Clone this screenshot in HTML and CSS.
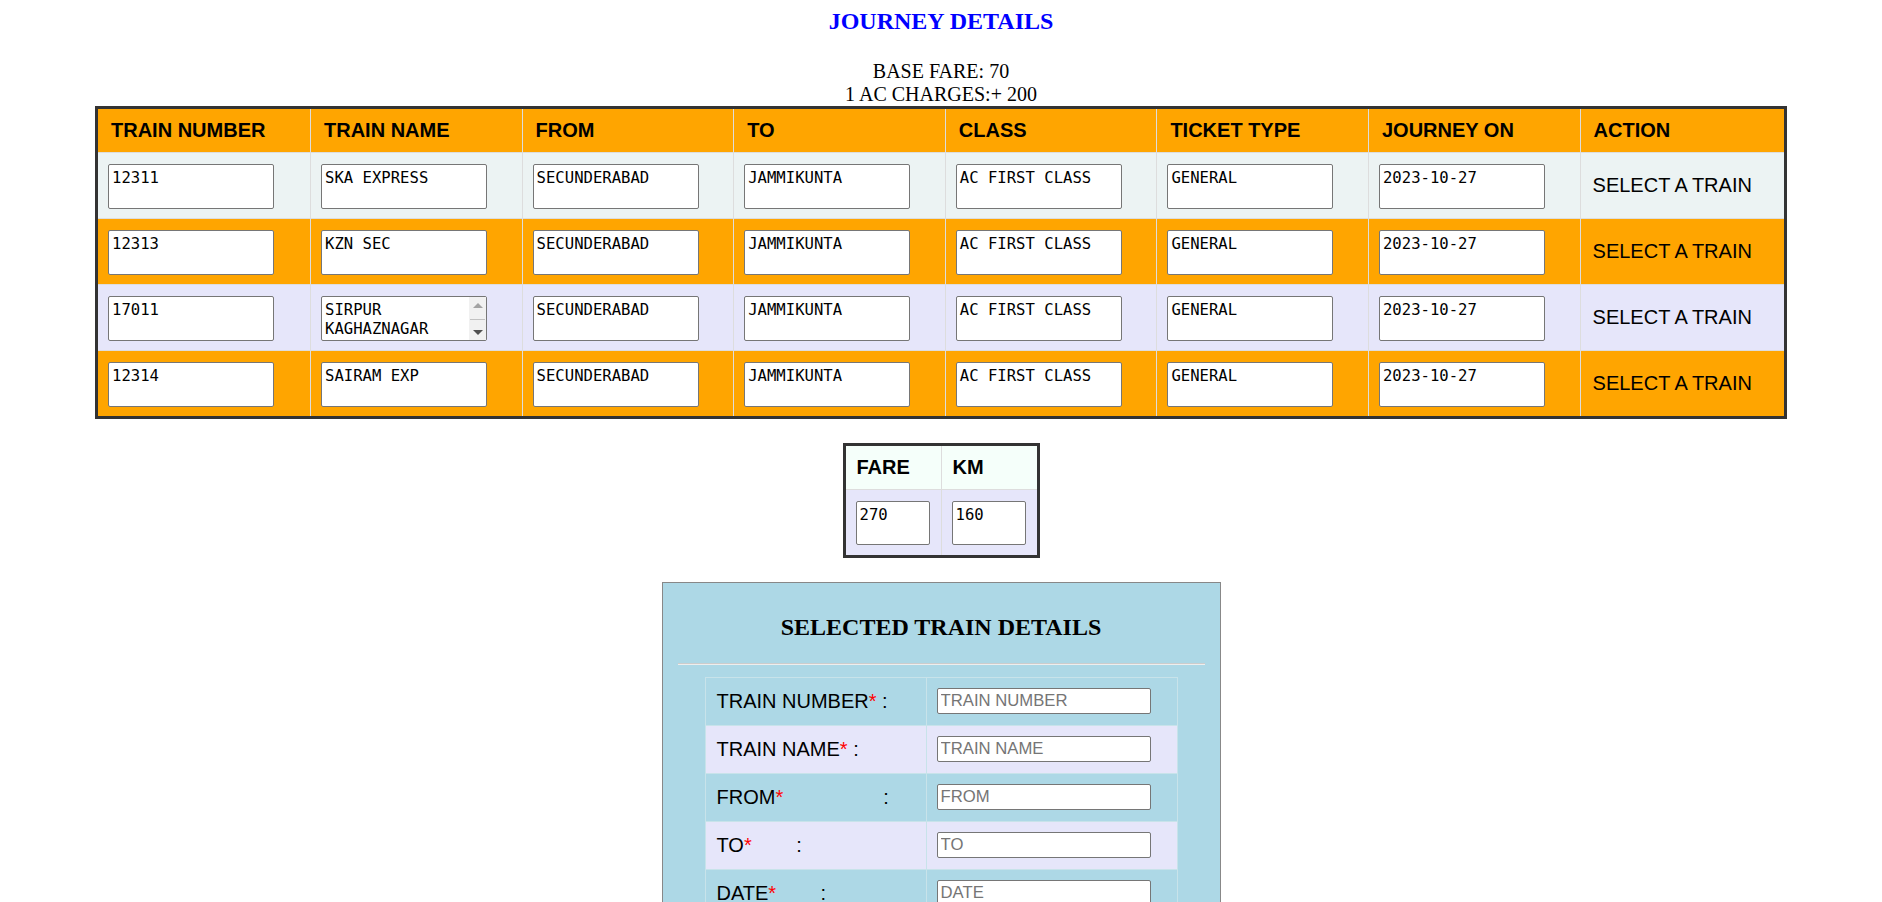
FILE: index.html
```html
<!DOCTYPE html>
<html lang="en">
<head>
<meta charset="UTF-8">
<title>Journey Details</title>
<link rel="stylesheet" href="styles.css">
</head>
<body>

<h2 class="page-title">JOURNEY DETAILS</h2>
<div class="fare-info">BASE FARE: 70<br>1 AC CHARGES:+ 200</div>

<table class="train-table">
    <colgroup>
        <col class="col-first">
        <col class="col-mid">
        <col class="col-mid">
        <col class="col-mid">
        <col class="col-mid">
        <col class="col-mid">
        <col class="col-mid">
        <col>
    </colgroup>
    <tr>
        <th>TRAIN NUMBER</th>
        <th>TRAIN NAME</th>
        <th>FROM</th>
        <th>TO</th>
        <th>CLASS</th>
        <th>TICKET TYPE</th>
        <th>JOURNEY ON</th>
        <th>ACTION</th>
    </tr>
    <tr class="row-grey">
        <td><textarea>12311</textarea></td>
        <td><textarea>SKA EXPRESS</textarea></td>
        <td><textarea>SECUNDERABAD</textarea></td>
        <td><textarea>JAMMIKUNTA</textarea></td>
        <td><textarea>AC FIRST CLASS</textarea></td>
        <td><textarea>GENERAL</textarea></td>
        <td><textarea>2023-10-27</textarea></td>
        <td class="action">SELECT A TRAIN</td>
    </tr>
    <tr class="row-orange">
        <td><textarea>12313</textarea></td>
        <td><textarea>KZN SEC</textarea></td>
        <td><textarea>SECUNDERABAD</textarea></td>
        <td><textarea>JAMMIKUNTA</textarea></td>
        <td><textarea>AC FIRST CLASS</textarea></td>
        <td><textarea>GENERAL</textarea></td>
        <td><textarea>2023-10-27</textarea></td>
        <td class="action">SELECT A TRAIN</td>
    </tr>
    <tr class="row-lavender">
        <td><textarea>17011</textarea></td>
        <td>
            <div class="scroll-wrap">
                <textarea class="scroll">SIRPUR KAGHAZNAGAR</textarea>
                <span class="fake-scroll"><i class="arr-up"></i><i class="thumb"></i><i class="arr-down"></i></span>
            </div>
        </td>
        <td><textarea>SECUNDERABAD</textarea></td>
        <td><textarea>JAMMIKUNTA</textarea></td>
        <td><textarea>AC FIRST CLASS</textarea></td>
        <td><textarea>GENERAL</textarea></td>
        <td><textarea>2023-10-27</textarea></td>
        <td class="action">SELECT A TRAIN</td>
    </tr>
    <tr class="row-orange">
        <td><textarea>12314</textarea></td>
        <td><textarea>SAIRAM EXP</textarea></td>
        <td><textarea>SECUNDERABAD</textarea></td>
        <td><textarea>JAMMIKUNTA</textarea></td>
        <td><textarea>AC FIRST CLASS</textarea></td>
        <td><textarea>GENERAL</textarea></td>
        <td><textarea>2023-10-27</textarea></td>
        <td class="action">SELECT A TRAIN</td>
    </tr>
</table>

<table class="fare-table">
    <tr>
        <th>FARE</th>
        <th>KM</th>
    </tr>
    <tr>
        <td><textarea>270</textarea></td>
        <td><textarea>160</textarea></td>
    </tr>
</table>

<div class="selected-box">
    <h2>SELECTED TRAIN DETAILS</h2>
    <hr>
    <table class="form-table">
        <tr>
            <td class="label">TRAIN NUMBER<span class="req">*</span> :</td>
            <td><input type="text" placeholder="TRAIN NUMBER"></td>
        </tr>
        <tr>
            <td class="label">TRAIN NAME<span class="req">*</span> :</td>
            <td><input type="text" placeholder="TRAIN NAME"></td>
        </tr>
        <tr>
            <td class="label">FROM<span class="req">*</span>&nbsp;&nbsp;&nbsp;&nbsp;&nbsp;&nbsp;&nbsp;&nbsp;&nbsp;&nbsp;&nbsp;&nbsp;&nbsp;&nbsp;&nbsp;&nbsp;&nbsp;&nbsp;:</td>
            <td><input type="text" placeholder="FROM"></td>
        </tr>
        <tr>
            <td class="label">TO<span class="req">*</span>&nbsp;&nbsp;&nbsp;&nbsp;&nbsp;&nbsp;&nbsp;&nbsp;:</td>
            <td><input type="text" placeholder="TO"></td>
        </tr>
        <tr>
            <td class="label">DATE<span class="req">*</span>&nbsp;&nbsp;&nbsp;&nbsp;&nbsp;&nbsp;&nbsp;&nbsp;:</td>
            <td><input type="text" placeholder="DATE"></td>
        </tr>
    </table>
</div>

</body>
</html>
```
FILE: styles.css
```css
body{
    margin: 8px;
    font-family: "Liberation Serif", "Times New Roman", serif;
    color: #000;
    background: #fff;
}
.page-title{
    margin: 0 0 25px;
    font-size: 24px;
    text-align: center;
    color: #0000ff;
}
.fare-info{
    font-size: 20px;
    text-align: center;
}

/* main list of trains */
.train-table{
    width: 1692px;
    margin: 0 auto;
    border-collapse: collapse;
    table-layout: fixed;
    border: 3px solid #333;
    font-family: "Liberation Sans", Arial, sans-serif;
}
.col-first{ width: 214px; }
.col-mid{ width: 211.6px; }
.train-table th,
.fare-table th{
    background: #ffa500;
    font-size: 20px;
    line-height: 23px;
    font-weight: bold;
    text-align: left;
    padding: 10px 12px 10px 13px;
    border: 1px solid #ddd;
}
.train-table td,
.fare-table td{
    padding: 11px 10px 9px;
    border: 1px solid #ddd;
    vertical-align: middle;
}
.row-grey td{ background: #ecf3f3; }
.row-orange td{ background: #ffa500; }
.row-lavender td{ background: #e6e6fa; }
.train-table td.action{
    font-size: 20px;
    padding: 0 10px 0 12px;
}

textarea{
    display: block;
    box-sizing: border-box;
    width: 166px;
    height: 45px;
    margin: 0;
    padding: 4px 3px 2px;
    border: 1px solid #767676;
    border-radius: 2px;
    background: #fff;
    font-family: "DejaVu Sans Mono", monospace;
    font-size: 15.6px;
    line-height: 19px;
    color: #000;
    resize: none;
    overflow: hidden;
}
textarea.scroll{
    padding-right: 20px;
}

/* scrollbar drawn over the long name box */
.scroll-wrap{
    position: relative;
    width: 166px;
}
.fake-scroll{
    position: absolute;
    top: 1px;
    right: 1px;
    bottom: 1px;
    width: 17px;
    background: #f1f1f1;
    display: flex;
    flex-direction: column;
    align-items: center;
    justify-content: space-between;
    padding: 6px 0 5px;
    box-sizing: border-box;
}
.fake-scroll i{
    display: block;
}
.arr-up{
    width: 0;
    height: 0;
    border-left: 5px solid transparent;
    border-right: 5px solid transparent;
    border-bottom: 5px solid #a3a3a3;
}
.thumb{
    width: 15px;
    height: 1px;
    background: #c1c1c1;
}
.arr-down{
    width: 0;
    height: 0;
    border-left: 5px solid transparent;
    border-right: 5px solid transparent;
    border-top: 5px solid #505050;
}

/* fare and distance */
.fare-table{
    width: 197px;
    margin: 24px auto 0;
    border-collapse: collapse;
    table-layout: fixed;
    border: 3px solid #333;
    font-family: "Liberation Sans", Arial, sans-serif;
}
.fare-table th{
    background: #f5fffa;
    padding: 10px 10px 10px 11px;
}
.fare-table td{
    background: #e6e6fa;
    padding: 11px 10px 10px;
}
.fare-table textarea{
    width: 74px;
    height: 44px;
}

/* selected train form */
.selected-box{
    width: 527px;
    margin: 24px auto 0;
    padding: 0 15px 20px;
    border: 1px solid #888;
    background: #add8e6;
}
.selected-box h2{
    margin: 0;
    padding: 31px 0 22px;
    font-size: 24px;
    text-align: center;
}
.selected-box hr{
    margin: 0;
    border: none;
    border-top: 1px solid #ccc;
    border-bottom: 1px solid #eee;
}
.form-table{
    width: 473px;
    margin: 12px auto 0;
    border-collapse: collapse;
    table-layout: fixed;
    font-family: "Liberation Sans", Arial, sans-serif;
}
.form-table td{
    padding: 10px 10px 11px;
    border: 1px solid #c8e3ea;
    vertical-align: middle;
}
.form-table td.label{
    width: 199px;
    font-size: 20px;
    padding-left: 11px;
    white-space: nowrap;
}
.form-table tr:nth-child(odd) td{ background: #add8e6; }
.form-table tr:nth-child(even) td{ background: #e6e6fa; }
.req{ color: red; }
.form-table input{
    display: block;
    box-sizing: border-box;
    width: 214px;
    height: 26px;
    margin: 0;
    padding: 1px 3px;
    border: 1px solid #767676;
    border-radius: 2px;
    background: #fff;
    font-family: "Liberation Sans", Arial, sans-serif;
    font-size: 16.7px;
}
.form-table input::placeholder{
    color: #757575;
}
```
